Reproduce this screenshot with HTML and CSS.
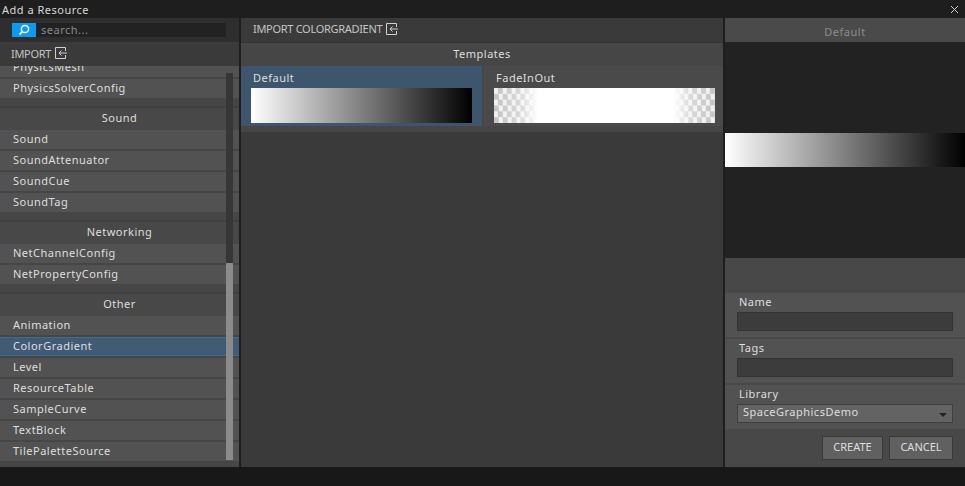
FILE: index.html
```html
<!DOCTYPE html>
<html lang="en">
<head>
    <meta charset="UTF-8">
    <meta name="viewport" content="width=device-width, initial-scale=1.0">
    <title>Add a Resource</title>
    <link rel="stylesheet" href="styles.css">
</head>
<body>

    <div class="titlebar">
        <span class="title">Add a Resource</span>
        <svg class="close" width="9" height="9" viewBox="0 0 9 9"><path d="M1 1L8 8M8 1L1 8" stroke="#cfcfcf" stroke-width="1" fill="none"/></svg>
    </div>

    <div class="dialog">
        <div class="left">
            <div class="search-row">
                <div class="search-btn">
                    <svg width="12" height="12" viewBox="0 0 12 12"><circle cx="7" cy="5" r="3.6" stroke="#fff" stroke-width="1.5" fill="none"/><path d="M4.4 7.6L1.5 10.5" stroke="#fff" stroke-width="1.8"/></svg>
                </div>
                <div class="search-box">search...</div>
            </div>
            <div class="import-row">
                <span>IMPORT</span>
                <svg class="import-icon" width="12" height="12" viewBox="0 0 12 12"><path d="M10.5 4V.5H.5V11.5H10.5V8M12 6H4M6.5 3.5L4 6L6.5 8.5" stroke="#d0d0d0" stroke-width="1" fill="none"/></svg>
            </div>
            <div class="list-clip">
                <div class="list">
                    <div class="row">PhysicsMesh</div>
                    <div class="row">PhysicsSolverConfig</div>
                    <div class="section">Sound</div>
                    <div class="row">Sound</div>
                    <div class="row">SoundAttenuator</div>
                    <div class="row">SoundCue</div>
                    <div class="row">SoundTag</div>
                    <div class="section">Networking</div>
                    <div class="row">NetChannelConfig</div>
                    <div class="row">NetPropertyConfig</div>
                    <div class="section">Other</div>
                    <div class="row">Animation</div>
                    <div class="row selected">ColorGradient</div>
                    <div class="row">Level</div>
                    <div class="row">ResourceTable</div>
                    <div class="row">SampleCurve</div>
                    <div class="row">TextBlock</div>
                    <div class="row">TilePaletteSource</div>
                </div>
                <div class="scroll-track"><div class="scroll-thumb"></div></div>
            </div>
        </div>

        <div class="middle">
            <div class="import-row wide">
                <span>IMPORT COLORGRADIENT</span>
                <svg class="import-icon" width="12" height="12" viewBox="0 0 12 12"><path d="M10.5 4V.5H.5V11.5H10.5V8M12 6H4M6.5 3.5L4 6L6.5 8.5" stroke="#d0d0d0" stroke-width="1" fill="none"/></svg>
            </div>
            <div class="templates-head">Templates</div>
            <div class="cards">
                <div class="card active">
                    <div class="card-name">Default</div>
                    <div class="strip black-white"></div>
                </div>
                <div class="card">
                    <div class="card-name">FadeInOut</div>
                    <div class="strip fade"></div>
                </div>
            </div>
        </div>

        <div class="right">
            <div class="preview-head">Default</div>
            <div class="preview">
                <div class="preview-band"></div>
            </div>
            <div class="spacer"></div>
            <div class="field">
                <label>Name</label>
                <div class="input"></div>
            </div>
            <div class="field">
                <label>Tags</label>
                <div class="input"></div>
            </div>
            <div class="field">
                <label>Library</label>
                <div class="select">
                    <span>SpaceGraphicsDemo</span>
                    <i class="caret"></i>
                </div>
            </div>
            <div class="actions">
                <div class="btn create">CREATE</div>
                <div class="btn cancel">CANCEL</div>
            </div>
        </div>
    </div>

    <div class="footer"></div>

</body>
</html>
```

FILE: styles.css
```css
body {
    font-family: "Noto Sans", sans-serif;
    font-size: 11px;
    letter-spacing: 0.5px;
    margin: 0;
    width: 965px;
    height: 486px;
    overflow: hidden;
    background-color: #181818;
    color: #dedede;
}

.titlebar {
    height: 18px;
    background-color: #1e1e1e;
    display: flex;
    justify-content: space-between;
    align-items: center;
    padding: 0 6px 0 2px;
}

.title {
    color: #d8d8d8;
}

.close {
    margin-top: 1px;
}

.dialog {
    height: 449px;
    display: flex;
    background-color: #1e1e1e;
}

.left {
    width: 239px;
    display: flex;
    flex-direction: column;
    background-color: #464646;
}

.middle {
    width: 482px;
    margin-left: 2px;
    background-color: #3a3a3a;
}

.right {
    width: 240px;
    margin-left: 2px;
    display: flex;
    flex-direction: column;
    background-color: #484848;
}

/* search and import bars */
.search-row {
    height: 24px;
    background-color: #2e2e2e;
    display: flex;
    align-items: center;
    padding-left: 12px;
}

.search-btn {
    width: 24px;
    height: 14px;
    background-color: #0a9cf5;
    display: flex;
    justify-content: center;
    align-items: center;
}

.search-box {
    width: 190px;
    height: 14px;
    line-height: 14px;
    padding-left: 5px;
    box-sizing: border-box;
    background-color: #222;
    color: #8a8a8a;
}

.import-row {
    height: 24px;
    box-sizing: border-box;
    background-color: #3a3a3a;
    display: flex;
    align-items: center;
    padding: 0 0 2px 11px;
    color: #c4c4c4;
    letter-spacing: -0.3px;
}

.import-row.wide {
    height: 25px;
    padding: 0 0 3px 12px;
    border-bottom: 1px solid #333;
}

.import-icon {
    margin-left: 4px;
}

/* resource list */
.list-clip {
    position: relative;
    flex: 1;
    overflow: hidden;
}

.list {
    margin-top: -8px;
}

.row {
    height: 19px;
    line-height: 18px;
    padding-left: 13px;
    margin-bottom: 2px;
    background-color: #525252;
}

.row.selected {
    box-sizing: border-box;
    line-height: 16px;
    background-color: #425b74;
    border-top: 1px solid #3a6c96;
    border-bottom: 1px solid #3a6c96;
}

.section {
    height: 24px;
    line-height: 20px;
    margin-top: 8px;
    border-top: 2px solid #404040;
    background-color: #484848;
    text-align: center;
    box-sizing: border-box;
}

.scroll-track {
    position: absolute;
    left: 226px;
    top: 7px;
    width: 7px;
    height: 387px;
    background-color: #363636;
}

.scroll-thumb {
    margin-top: 190px;
    height: 197px;
    background-color: #8b8b8b;
}

/* templates */
.templates-head {
    height: 23px;
    line-height: 21px;
    background-color: #464646;
    text-align: center;
}

.cards {
    display: flex;
    gap: 2px;
    padding-bottom: 6px;
    background-color: #464646;
}

.card {
    width: 239px;
    height: 60px;
    padding: 3px 8px 0 10px;
    box-sizing: border-box;
    background-color: #4a4a4a;
}

.card.active {
    width: 241px;
    padding-right: 10px;
    background-color: #3e566d;
}

.card-name {
    height: 19px;
    line-height: 17px;
    padding-left: 2px;
}

.strip {
    height: 35px;
}

.black-white {
    background: linear-gradient(to right, #fff, #000);
}

.fade {
    background:
        linear-gradient(to right, rgba(255, 255, 255, 0) 0%, rgba(255, 255, 255, 0.35) 12%, #fff 20%, #fff 81%, rgba(255, 255, 255, 0.35) 89%, rgba(255, 255, 255, 0) 100%),
        repeating-conic-gradient(#c4c4c4 0 25%, #f0f0f0 0 50%) 0 0 / 8.84px 11.67px;
}

/* right panel */
.preview-head {
    height: 24px;
    line-height: 28px;
    background-color: #4a4a4a;
    text-align: center;
    color: #8c8c8c;
}

.preview {
    height: 216px;
    background-color: #222;
    display: flex;
    align-items: center;
}

.preview-band {
    width: 100%;
    height: 34px;
    background: linear-gradient(to right, #fff, #000);
}

.spacer {
    height: 35px;
}

.field {
    height: 44px;
    margin-bottom: 2px;
    padding: 0 12px;
    background-color: #525252;
}

.field label {
    display: block;
    height: 19px;
    line-height: 18px;
    padding-left: 2px;
}

.input {
    height: 19px;
    box-sizing: border-box;
    background-color: #3c3c3c;
    border: 1px solid #333;
}

.select {
    height: 19px;
    box-sizing: border-box;
    background-color: #636363;
    border: 1px solid #3f3f3f;
    padding: 0 0 5px 5px;
    display: flex;
    justify-content: space-between;
    align-items: center;
}

.caret {
    width: 0;
    height: 0;
    margin-right: 5px;
    margin-top: 8px;
    border-left: 4px solid transparent;
    border-right: 4px solid transparent;
    border-top: 4px solid #222;
}

.actions {
    display: flex;
    justify-content: flex-end;
    gap: 6px;
    padding: 5px 12px 0 0;
}

.btn {
    height: 24px;
    line-height: 20px;
    box-sizing: border-box;
    background-color: #606060;
    border: 1px solid #383838;
    text-align: center;
    letter-spacing: 0;
}

.btn.create {
    width: 61px;
}

.btn.cancel {
    width: 64px;
}

.footer {
    height: 19px;
}
```
